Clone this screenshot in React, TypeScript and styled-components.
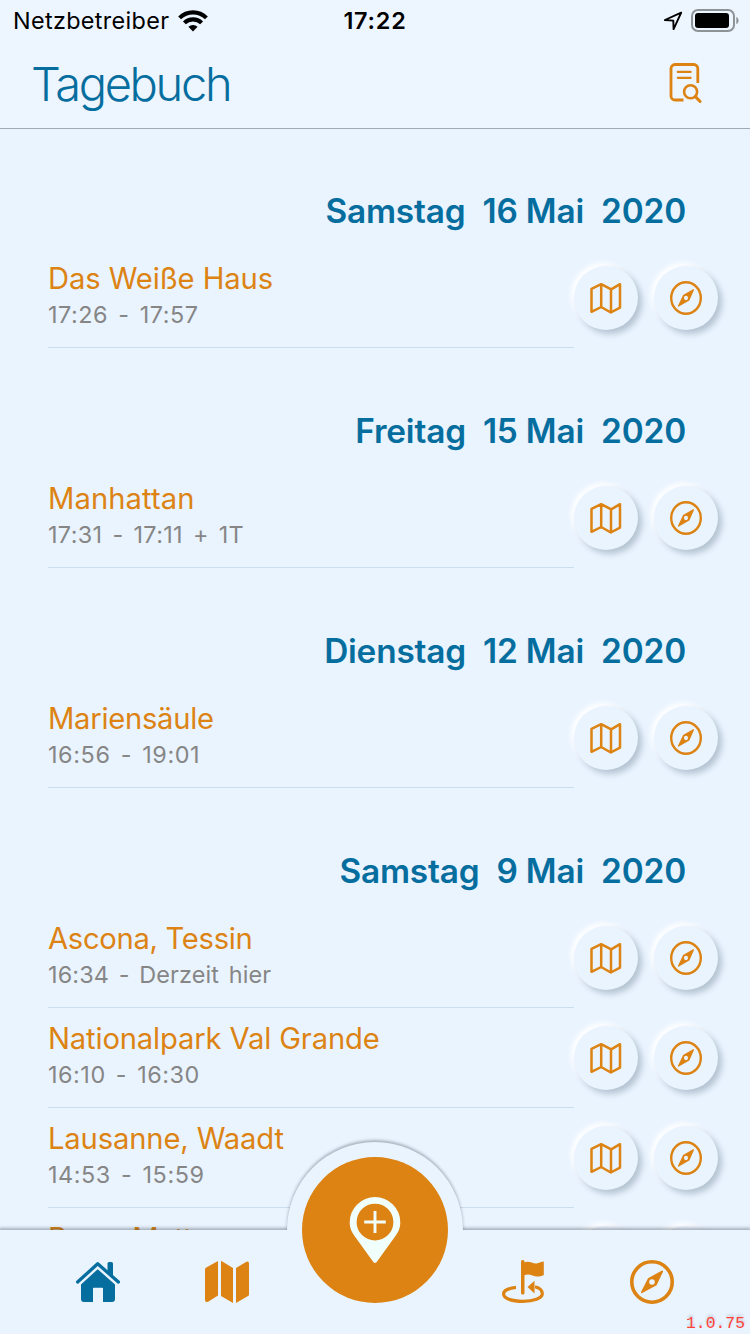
import React from "react";
import styled, { createGlobalStyle } from "styled-components";

const BLUE = "#066e9e";
const ORANGE = "#dc8313";
const SURFACE = "#eaf4ff";

const Global = createGlobalStyle`
  * { box-sizing: border-box; }
  body { margin: 0; background: ${SURFACE}; font-family: Inter, "Liberation Sans", sans-serif; }
  svg { display: block; flex: none; }
`;

const Screen = styled.div`
  width: 750px;
  height: 1334px;
  overflow: hidden;
  display: flex;
  flex-direction: column;
  background: ${SURFACE};
`;

const Header = styled.header`
  position: relative;
  z-index: 1;
  flex: none;
  height: 128px;
  background: #edf5ff;
  box-shadow: 0 1px 0 #a0aab3;
`;

const StatusBar = styled.div`
  height: 40px;
  display: grid;
  grid-template-columns: 1fr auto 1fr;
  align-items: center;
  padding: 2px 11px 0 13px;
  color: #000;
  font-size: 23.4px;
  line-height: 28px;
`;

const Carrier = styled.div`
  display: flex;
  align-items: center;
  gap: 9px;
  letter-spacing: 0.34px;
`;

const Clock = styled.div`
  margin-left: -2px;
  font-weight: 600;
  letter-spacing: 0.8px;
`;

const Indicators = styled.div`
  display: flex;
  justify-content: flex-end;
  align-items: center;
  gap: 8px;
`;

const TitleBar = styled.div`
  height: 88px;
  display: flex;
  justify-content: space-between;
  align-items: center;
  padding: 0 47px 0 31px;
`;

const Title = styled.h1`
  margin: 0;
  font-size: 47px;
  font-weight: 300;
  line-height: 56px;
  letter-spacing: -2.3px;
  color: ${BLUE};
`;

const List = styled.main`
  flex: 1;
  min-height: 0;
  overflow: hidden;
`;

const DayHeading = styled.h2`
  margin: 0;
  height: 120px;
  display: flex;
  justify-content: flex-end;
  gap: 17px;
  padding: 63px 64px 0 0;
  font-size: 33.4px;
  font-weight: 600;
  line-height: 40px;
  letter-spacing: -0.18px;
  color: ${BLUE};
`;

const Row = styled.div`
  height: 100px;
  display: flex;
  align-items: center;
  padding-left: 48px;
`;

const Entry = styled.div`
  width: 526px;
  height: 100px;
  padding-top: 12px;
  border-bottom: 1px solid #cbdeee;
`;

const Place = styled.div<{ $spacing: number }>`
  font-size: 29.2px;
  line-height: 38px;
  letter-spacing: ${(p) => p.$spacing}px;
  color: ${ORANGE};
`;

const Time = styled.div<{ $spacing: number }>`
  font-size: 23.4px;
  line-height: 34px;
  letter-spacing: ${(p) => p.$spacing}px;
  word-spacing: 3px;
  color: #868686;
`;

const Actions = styled.div`
  display: flex;
  gap: 16px;
`;

const RoundButton = styled.button`
  width: 64px;
  height: 64px;
  padding: 0;
  border: 0;
  border-radius: 50%;
  display: flex;
  align-items: center;
  justify-content: center;
  background: ${SURFACE};
  box-shadow: 4px 4px 6px #b4c2d1, -3px -3px 5px #ffffff;
`;

const TabBar = styled.nav`
  position: relative;
  flex: none;
  height: 104px;
  display: flex;
  padding: 0 34px 0 33px;
  background: ${SURFACE};
  box-shadow: 0 -1px 3px 1px rgba(40, 50, 60, 0.36);
`;

const Tab = styled.div<{ $width: number }>`
  width: ${(p) => p.$width}px;
  height: 104px;
  display: flex;
  align-items: center;
  justify-content: center;
`;

const Bump = styled.div`
  position: absolute;
  left: 281px;
  top: -96px;
  width: 188px;
  height: 96px;
  padding: 8px 6px 0;
  overflow: hidden;
`;

const BumpDisc = styled.div`
  width: 176px;
  height: 176px;
  border-radius: 50%;
  background: ${SURFACE};
  box-shadow: 0 -2px 3px rgba(40, 50, 60, 0.34);
`;

const AddButton = styled.button`
  position: absolute;
  left: 302px;
  top: -73px;
  width: 146px;
  height: 146px;
  padding: 0 1px 0 0;
  border: 0;
  border-radius: 50%;
  display: flex;
  align-items: center;
  justify-content: center;
  background: ${ORANGE};
`;

const Version = styled.div`
  position: absolute;
  right: 5px;
  bottom: 0;
  font-family: "Liberation Mono", monospace;
  font-size: 16.4px;
  line-height: 20px;
  color: #ff4238;
  text-shadow: 0 -2px 3px rgba(0, 0, 0, 0.2);
`;

const WifiIcon = () => (
  <svg width="30" height="22" viewBox="0 0 30 22" fill="none" stroke="#000" strokeWidth="4.1">
    <path d="M1.600 7.900a19 19 0 0 1 26.800 0" />
    <path d="M6.400 12.900a12.200 12.200 0 0 1 17.200 0" />
    <path d="M15 21.400l-4.600-4.600a6.500 6.500 0 0 1 9.200 0z" fill="#000" stroke="none" />
  </svg>
);

const LocationIcon = () => (
  <svg width="20" height="20" viewBox="0 0 20 20" fill="none" stroke="#000" strokeWidth="1.900" strokeLinejoin="round">
    <path d="M18.200 1.600L1.900 9l8.400.6.3 8.500z" />
  </svg>
);

const BatteryIcon = () => (
  <svg width="48" height="24" viewBox="0 0 48 24">
    <rect x="1" y="1" width="42" height="21" rx="6" fill="none" stroke="#8e9398" strokeWidth="2" />
    <rect x="4" y="4" width="34" height="15" rx="3" fill="#000" />
    <path d="M45.300 8c3 1.200 3 6 0 7.200z" fill="#8e9398" />
  </svg>
);

const SearchButton = styled.button`
  margin-bottom: 3px;
  padding: 0;
  border: 0;
  background: none;
`;

const DiarySearchIcon = () => (
  <svg width="34" height="42" viewBox="0 0 34 42" fill="none" stroke={ORANGE} strokeLinecap="round">
    <path d="M28.800 21V6.500a4 4 0 0 0-4-4H6a4 4 0 0 0-4 4v27.500a4 4 0 0 0 4 4h8.500" strokeWidth="2.800" strokeLinecap="butt" />
    <path d="M8.800 9.900h12.800M8.800 15.800h12.800" strokeWidth="2.300" />
    <circle cx="21.600" cy="29.800" r="6.500" strokeWidth="2.600" />
    <path d="M26.400 34.600l4.700 4.900" strokeWidth="3" />
  </svg>
);

const MapOutlineIcon = () => (
  <svg width="34" height="34" viewBox="0 0 34 34" fill="none" stroke={ORANGE} strokeWidth="2.500" strokeLinejoin="round">
    <path d="M2.500 7.900L12.200 3.200l10 5.200L31 3.200v23.400L21.800 31.500 12.200 26 2.500 30.800zM12.200 3.200v22.800M22 8.400v23" />
  </svg>
);

const CompassIcon = ({ width, height, stroke }: { width: number; height: number; stroke: number }) => (
  <svg width={width} height={height} viewBox="0 0 44 44" preserveAspectRatio="none">
    <circle cx="22" cy="22" r={22 - stroke / 2} fill="none" stroke={ORANGE} strokeWidth={stroke} />
    <path
      d="M31.600 10.800q1.900-.8 1.400 1L26.600 25.200 12.200 33q-1.700.6-1.200-1L18 18.200zM22 19.200a2.800 2.800 0 1 0 0 5.600 2.800 2.800 0 0 0 0-5.600z"
      fill={ORANGE}
      fillRule="evenodd"
    />
  </svg>
);

const HomeIcon = () => (
  <svg width="44" height="42" viewBox="0 0 44 42" fill={BLUE}>
    <path d="M31.500 10V2.500q0-1.500 1.500-1.500h2.500q1.500 0 1.500 1.500V15z" />
    <path d="M21.700 8.200L39 23.500V38q0 3-3 3h-9V27.500q0-.7-.7-.7h-8.600q-.7 0-.7.700V41H8q-3 0-3-3V23.500z" />
    <path d="M1.600 21L21.700 2.800 42.400 21" fill="none" stroke={BLUE} strokeWidth="3.300" strokeLinecap="round" strokeLinejoin="round" />
  </svg>
);

const MapFilledIcon = () => (
  <svg width="44" height="44" viewBox="0 0 44 44" fill={ORANGE}>
    <path d="M0 9.600Q0 8.300 1.200 7.600L13 1v34.600L3.500 41.400Q0 43 0 40z" />
    <path d="M16 .8l12 7.200v35L16 36z" />
    <path d="M31 8l10-6q3-1.300 3 1.600v30.900q0 1-1 1.600L31 43z" />
  </svg>
);

const FlagIcon = () => (
  <svg width="42" height="46" viewBox="0 0 42 46" fill={ORANGE}>
    <rect x="19" y="1" width="3.500" height="34.500" rx="1.500" />
    <path d="M22 3.500c6-2.200 9 2 13.500.8 2-.5 4.200-1.500 6.300-1.800v13.400c-3.500 1.600-7.300 2.400-11.300.7-3-1.200-5-1.600-8.500-.3z" />
    <path
      d="M14 28.400C6 29.200 1.600 32 1.600 35c0 4.600 8.600 7.300 19.200 7.300S40.300 39.300 40.300 34.800c0-3.600-3.300-6-7.300-7"
      fill="none"
      stroke={ORANGE}
      strokeWidth="3.200"
    />
    <path d="M25.500 28l7-6.200v12.600z" />
  </svg>
);

const PinPlusIcon = () => (
  <svg width="52" height="68" viewBox="0 0 52 68">
    <path
      d="M26 1A25.300 25.300 0 0 0 .7 26.300C.7 33 3.500 37.500 7 42l17.500 24.300q1.500 1.500 3 0L45 42c3.500-4.500 6.300-9 6.300-15.700A25.300 25.300 0 0 0 26 1zm0 6.700a18.400 18.400 0 1 1 0 36.800 18.400 18.400 0 0 1 0-36.800z"
      fill="#f1fffc"
      fillRule="evenodd"
    />
    <path d="M26 15v22M15.200 26h21.600" stroke="#f1fffc" strokeWidth="2.900" />
  </svg>
);

type Visit = { place: string; time: string; ps: number; ts: number };
type Day = { weekday: string; date: string; year: string; visits: Visit[] };

const days: Day[] = [
  {
    weekday: "Samstag",
    date: "16 Mai",
    year: "2020",
    visits: [{ place: "Das Weiße Haus", time: "17:26 - 17:57", ps: -0.1, ts: 0.53 }],
  },
  {
    weekday: "Freitag",
    date: "15 Mai",
    year: "2020",
    visits: [{ place: "Manhattan", time: "17:31 - 17:11 + 1T", ps: 0.08, ts: 0.36 }],
  },
  {
    weekday: "Dienstag",
    date: "12 Mai",
    year: "2020",
    visits: [{ place: "Mariensäule", time: "16:56 - 19:01", ps: -0.27, ts: 0.6 }],
  },
  {
    weekday: "Samstag",
    date: "9 Mai",
    year: "2020",
    visits: [
      { place: "Ascona, Tessin", time: "16:34 - Derzeit hier", ps: -0.3, ts: 0.13 },
      { place: "Nationalpark Val Grande", time: "16:10 - 16:30", ps: -0.15, ts: 0.53 },
      { place: "Lausanne, Waadt", time: "14:53 - 15:59", ps: -0.14, ts: 0.57 },
      { place: "Presa Matto", time: "13:10 - 13:42", ps: -0.3, ts: 0.5 },
    ],
  },
];

const VisitRow = ({ place, time, ps, ts }: Visit) => (
  <Row>
    <Entry>
      <Place $spacing={ps}>{place}</Place>
      <Time $spacing={ts}>{time}</Time>
    </Entry>
    <Actions>
      <RoundButton aria-label="Karte">
        <MapOutlineIcon />
      </RoundButton>
      <RoundButton aria-label="Kompass">
        <CompassIcon width={32} height={34} stroke={3.3} />
      </RoundButton>
    </Actions>
  </Row>
);

export default function App() {
  return (
    <Screen>
      <Global />
      <Header>
        <StatusBar>
          <Carrier>
            Netzbetreiber
            <WifiIcon />
          </Carrier>
          <Clock>17:22</Clock>
          <Indicators>
            <LocationIcon />
            <BatteryIcon />
          </Indicators>
        </StatusBar>
        <TitleBar>
          <Title>Tagebuch</Title>
          <SearchButton aria-label="Suchen">
            <DiarySearchIcon />
          </SearchButton>
        </TitleBar>
      </Header>
      <List>
        {days.map((day) => (
          <section key={day.weekday + day.date}>
            <DayHeading>
              <span>{day.weekday}</span>
              <span>{day.date}</span>
              <span>{day.year}</span>
            </DayHeading>
            {day.visits.map((visit) => (
              <VisitRow key={visit.place} {...visit} />
            ))}
          </section>
        ))}
      </List>
      <TabBar>
        <Bump>
          <BumpDisc />
        </Bump>
        <Tab $width={130}>
          <HomeIcon />
        </Tab>
        <Tab $width={128}>
          <MapFilledIcon />
        </Tab>
        <Tab $width={168} />
        <Tab $width={128}>
          <FlagIcon />
        </Tab>
        <Tab $width={129}>
          <CompassIcon width={44} height={44} stroke={3.6} />
        </Tab>
        <AddButton aria-label="Ort hinzufügen">
          <PinPlusIcon />
        </AddButton>
        <Version>1.0.75</Version>
      </TabBar>
    </Screen>
  );
}
